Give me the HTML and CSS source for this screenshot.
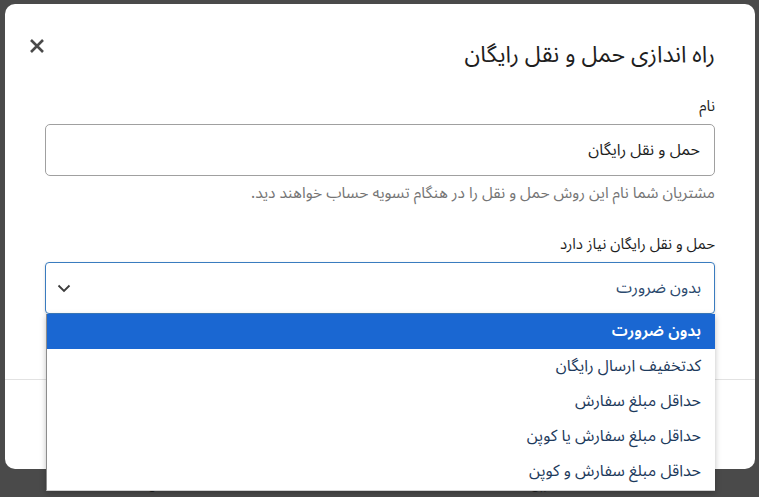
FILE: index.html
```html
<!DOCTYPE html>
<html lang="fa" dir="rtl">
<head>
<meta charset="utf-8">
<title>راه اندازی حمل و نقل رایگان</title>
<link rel="stylesheet" href="styles.css">
</head>
<body>
<div class="page">
  <div class="page-row">
    <span class="page-cell page-cell-coupon">کوپن</span>
    <span class="page-cell page-cell-cod">حمل نقد</span>
  </div>
</div>
<div class="overlay">
  <div class="modal" role="dialog">
    <div class="modal-head">
      <h1 class="modal-title">راه اندازی حمل و نقل رایگان</h1>
      <button class="modal-close" type="button" aria-label="بستن">
        <svg width="24" height="24" viewBox="0 0 24 24"><path d="M6 6 L18 18 M18 6 L6 18" stroke="#4a4a4a" stroke-width="2.6" stroke-linecap="butt" fill="none"/></svg>
      </button>
    </div>
    <div class="modal-body">
      <div class="field">
        <label class="field-label">نام</label>
        <div class="text-input">حمل و نقل رایگان</div>
        <p class="field-help">مشتریان شما نام این روش حمل و نقل را در هنگام تسویه حساب خواهند دید.</p>
      </div>
      <div class="field field-second">
        <label class="field-label">حمل و نقل رایگان نیاز دارد</label>
        <div class="select-wrap">
          <div class="select-box">
            <span class="select-value">بدون ضرورت</span>
            <svg class="select-chevron" width="16" height="16" viewBox="0 0 16 16"><path d="M2.5 5.5 L8 11 L13.5 5.5" stroke="#3c3c3c" stroke-width="1.8" fill="none"/></svg>
          </div>
          <ul class="listbox">
            <li class="option option-active">بدون ضرورت</li>
            <li class="option">کدتخفیف ارسال رایگان</li>
            <li class="option">حداقل مبلغ سفارش</li>
            <li class="option">حداقل مبلغ سفارش یا کوپن</li>
            <li class="option">حداقل مبلغ سفارش و کوپن</li>
          </ul>
        </div>
      </div>
    </div>
    <div class="modal-foot"></div>
  </div>
</div>
</body>
</html>
```
FILE: styles.css
```css
html, body {
  margin: 0;
  padding: 0;
}
body {
  width: 759px;
  height: 497px;
  overflow: hidden;
  background: #4a4a4a;
  font-family: "Noto Sans Arabic", "DejaVu Sans", "Noto Sans", sans-serif;
  direction: rtl;
  position: relative;
}
.page {
  height: 497px;
  display: flex;
  flex-direction: column;
  justify-content: flex-end;
}
.page-row {
  display: flex;
  height: 22px;
  padding: 0 205px 0 0;
  gap: 360px;
  color: #1b1b1b;
  font-size: 12px;
  line-height: 22px;
}
.overlay {
  position: absolute;
  inset: 0;
  padding: 4px 4px 0 5px;
}
.modal {
  width: 750px;
  height: 465px;
  background: #fff;
  border-radius: 10px;
  display: flex;
  flex-direction: column;
  box-sizing: border-box;
}
.modal-head {
  display: flex;
  justify-content: space-between;
  align-items: flex-start;
  padding: 30px 40px 0 20px;
  height: 66px;
  box-sizing: border-box;
}
.modal-title {
  margin: 6px 0 0;
  font-size: 23px;
  line-height: 30px;
  font-weight: 400;
  color: #1e1e1e;
}
.modal-close {
  width: 24px;
  height: 24px;
  padding: 0;
  border: 0;
  background: none;
  display: flex;
}
.modal-body {
  padding: 26px 40px 65px;
}
.field {
  display: flex;
  flex-direction: column;
}
.field-second {
  margin-top: 32px;
}
.field-label {
  font-size: 15px;
  line-height: 20px;
  font-weight: 400;
  color: #1e1e1e;
  margin-bottom: 8px;
}
.text-input {
  height: 52px;
  box-sizing: border-box;
  border: 1px solid #a0a0a0;
  border-radius: 5px;
  padding: 0 14px;
  font-size: 16px;
  line-height: 50px;
  color: #1e1e1e;
}
.field-help {
  margin: 8px 0 0;
  font-size: 15.5px;
  line-height: 18px;
  color: #757575;
}
.select-wrap {
  position: relative;
}
.select-box {
  height: 52px;
  box-sizing: border-box;
  border: 1.5px solid #3a7cbf;
  border-radius: 4px;
  padding: 0 13px 0 10px;
  display: flex;
  align-items: center;
  justify-content: space-between;
  box-shadow: 0 1px 3px rgba(0,0,0,0.15);
}
.select-value {
  font-size: 16px;
  color: #2c4a6e;
}
.select-chevron {
  display: block;
}
.listbox {
  position: absolute;
  top: 52px;
  left: 1px;
  right: 0;
  margin: 0;
  padding: 0 0 1px;
  list-style: none;
  background: #fff;
  border-left: 1px solid #8c8c8c;
  border-bottom: 1px solid #d0d0d0;
  box-shadow: 0 2px 6px rgba(0,0,0,0.25);
  z-index: 5;
}
.option {
  height: 35px;
  line-height: 35px;
  padding: 0 14px;
  font-size: 16px;
  color: #1d3a5c;
}
.option-active {
  background: #1a67d2;
  color: #fff;
  font-weight: 600;
}
.modal-foot {
  flex: 1;
  border-top: 1px solid #e2e2e2;
}
```
